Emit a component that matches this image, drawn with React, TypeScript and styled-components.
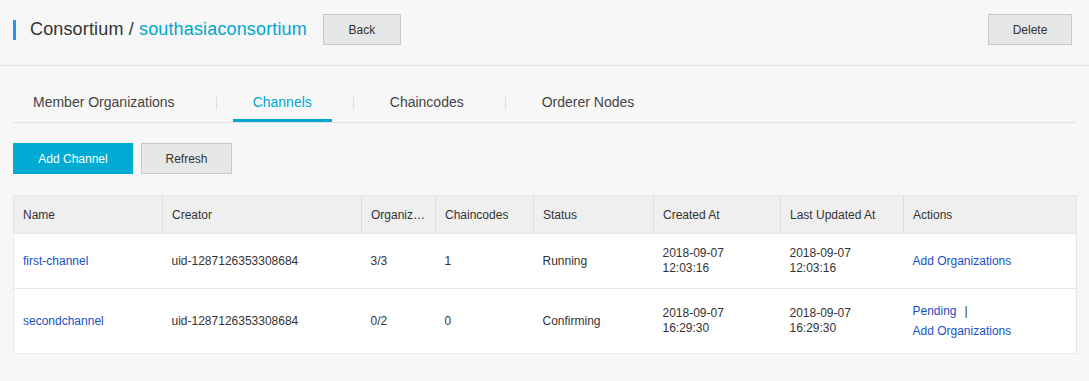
import styled, { createGlobalStyle } from "styled-components";
import { Fragment } from "react";

const GlobalStyle = createGlobalStyle`
    body {
        margin: 0;
        background: #f7f7f7;
        font-family: "Liberation Sans", Helvetica, Arial, sans-serif;
        color: #333;
    }
`;

const Page = styled.div`
    width: 1089px;
    min-height: 381px;
    background: #f7f7f7;
`;

const Header = styled.div`
    display: flex;
    align-items: center;
    padding: 14px 17px 20px 13px;
    border-bottom: 1px solid #e3e3e3;
`;

const Marker = styled.span`
    width: 3px;
    height: 20px;
    background: #2b95f0;
`;

const Title = styled.h1`
    margin: 0 0 0 14px;
    font-size: 18px;
    letter-spacing: 0.15px;
    font-weight: normal;
    color: #333;
`;

const TitleLink = styled.span`
    color: #00a6d0;
`;

const GrayButton = styled.button<{ $width: number }>`
    width: ${(p) => p.$width}px;
    height: 31px;
    border: 1px solid #c8c8c8;
    background: #e6e7e7;
    color: #333;
    font-family: inherit;
    font-size: 12px;
    padding: 0;
    cursor: pointer;
`;

const BackButton = styled(GrayButton)`
    margin-left: 16px;
`;

const DeleteButton = styled(GrayButton)`
    margin-left: auto;
`;

const Content = styled.div`
    padding: 20px 13px 0 13px;
`;

const Tabs = styled.div`
    display: flex;
    align-items: center;
    border-bottom: 1px solid #e3e3e3;
`;

const Tab = styled.div<{ $active?: boolean }>`
    height: 36px;
    box-sizing: border-box;
    line-height: 33px;
    padding: 0 20px;
    font-size: 14px;
    color: ${(p) => (p.$active ? "#00a6d0" : "#444")};
    border-bottom: 3px solid ${(p) => (p.$active ? "#00a6d0" : "transparent")};
`;

const TabDivider = styled.span`
    width: 1px;
    height: 14px;
    margin: 0 16px 3px 21px;
    background: #e0e0e0;
`;

const Toolbar = styled.div`
    display: flex;
    gap: 8px;
    margin-top: 20px;
`;

const PrimaryButton = styled.button`
    width: 120px;
    height: 31px;
    border: none;
    background: #00abd3;
    color: #fff;
    font-family: inherit;
    font-size: 12px;
    padding: 0;
    cursor: pointer;
`;

const Table = styled.table`
    margin-top: 21px;
    width: 1063px;
    border-collapse: collapse;
    table-layout: fixed;
    background: #fff;
    border: 1px solid #e6e6e6;
    font-size: 12px;
`;

const Th = styled.th`
    height: 37px;
    padding: 0 9px;
    background: #efefef;
    text-align: left;
    font-weight: normal;
    color: #333;
    white-space: nowrap;
    overflow: hidden;
    text-overflow: ellipsis;
    border-left: 1px solid #dcdcdc;
    border-bottom: 1px solid #e6e6e6;
    &:first-child {
        border-left: none;
    }
`;

const Td = styled.td`
    padding: 12px 9px;
    line-height: 15px;
    color: #333;
    vertical-align: middle;
    border-bottom: 1px solid #e9e9e9;
`;

const Link = styled.a`
    color: #1a4fc6;
    text-decoration: none;
    cursor: pointer;
`;

const Actions = styled.div`
    line-height: 20px;
`;

const Bar = styled.span`
    color: #333;
    margin-left: 8px;
`;

type Channel = {
    name: string;
    creator: string;
    orgs: string;
    chaincodes: number;
    status: string;
    created: [string, string];
    updated: [string, string];
    pending: boolean;
};

const channels: Channel[] = [
    {
        name: "first-channel",
        creator: "uid-1287126353308684",
        orgs: "3/3",
        chaincodes: 1,
        status: "Running",
        created: ["2018-09-07", "12:03:16"],
        updated: ["2018-09-07", "12:03:16"],
        pending: false,
    },
    {
        name: "secondchannel",
        creator: "uid-1287126353308684",
        orgs: "0/2",
        chaincodes: 0,
        status: "Confirming",
        created: ["2018-09-07", "16:29:30"],
        updated: ["2018-09-07", "16:29:30"],
        pending: true,
    },
];

const columns = [
    { title: "Name", width: 149 },
    { title: "Creator", width: 199 },
    { title: "Organizations", width: 74 },
    { title: "Chaincodes", width: 98 },
    { title: "Status", width: 120 },
    { title: "Created At", width: 127 },
    { title: "Last Updated At", width: 123 },
    { title: "Actions", width: 173 },
];

const tabs = ["Member Organizations", "Channels", "Chaincodes", "Orderer Nodes"];

function App() {
    return (
        <Page>
            <GlobalStyle />
            <Header>
                <Marker />
                <Title>
                    Consortium / <TitleLink>southasiaconsortium</TitleLink>
                </Title>
                <BackButton $width={78}>Back</BackButton>
                <DeleteButton $width={84}>Delete</DeleteButton>
            </Header>
            <Content>
                <Tabs>
                    {tabs.map((t, i) => (
                        <Fragment key={t}>
                            {i > 0 && <TabDivider />}
                            <Tab $active={t === "Channels"}>{t}</Tab>
                        </Fragment>
                    ))}
                </Tabs>
                <Toolbar>
                    <PrimaryButton>Add Channel</PrimaryButton>
                    <GrayButton $width={91}>Refresh</GrayButton>
                </Toolbar>
                <Table>
                    <colgroup>
                        {columns.map((c) => (
                            <col key={c.title} style={{ width: c.width }} />
                        ))}
                    </colgroup>
                    <thead>
                        <tr>
                            {columns.map((c) => (
                                <Th key={c.title}>{c.title}</Th>
                            ))}
                        </tr>
                    </thead>
                    <tbody>
                        {channels.map((ch) => (
                            <tr key={ch.name}>
                                <Td>
                                    <Link>{ch.name}</Link>
                                </Td>
                                <Td>{ch.creator}</Td>
                                <Td>{ch.orgs}</Td>
                                <Td>{ch.chaincodes}</Td>
                                <Td>{ch.status}</Td>
                                <Td>
                                    {ch.created[0]}
                                    <br />
                                    {ch.created[1]}
                                </Td>
                                <Td>
                                    {ch.updated[0]}
                                    <br />
                                    {ch.updated[1]}
                                </Td>
                                <Td>
                                    <Actions>
                                        {ch.pending && (
                                            <div>
                                                <Link>Pending</Link>
                                                <Bar>|</Bar>
                                            </div>
                                        )}
                                        <Link>Add Organizations</Link>
                                    </Actions>
                                </Td>
                            </tr>
                        ))}
                    </tbody>
                </Table>
            </Content>
        </Page>
    );
}

export default App;
